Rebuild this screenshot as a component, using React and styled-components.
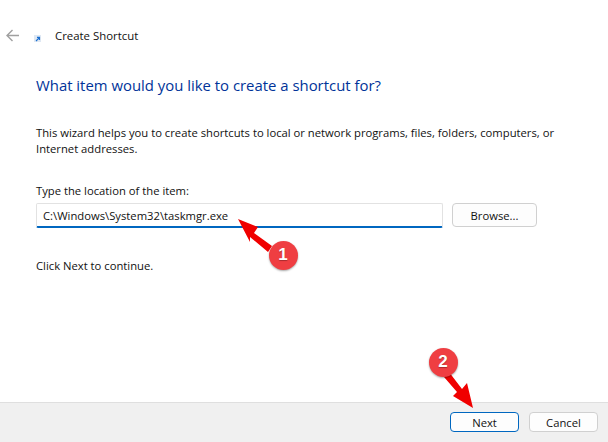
import styled, { createGlobalStyle } from "styled-components";

const Global = createGlobalStyle`
  html, body { margin: 0; padding: 0; background: #fff; }
  #root { width: 608px; height: 442px; overflow: hidden; }
`;

const Win = styled.div`
  position: relative;
  width: 608px;
  height: 442px;
  display: flex;
  flex-direction: column;
  font-family: "Open Sans", "Noto Sans", sans-serif;
  font-size: 11.25px;
  color: #111;
  background: #fff;
`;

const Header = styled.div`
  display: flex;
  align-items: center;
  height: 16px;
  padding: 27px 0 0 6px;
`;

const Title = styled.div`
  margin-left: 14px;
  font-size: 11.4px;
  color: #111;
`;

const Content = styled.div`
  flex: 1;
  padding: 0 0 0 36px;
`;

const Heading = styled.h1`
  margin: 31px 0 0;
  font-size: 14.9px;
  line-height: 22px;
  font-weight: 400;
  color: #003399;
`;

const Intro = styled.p`
  margin: 29px 0 0;
  width: 530px;
  line-height: 16px;
`;

const Label = styled.div`
  margin-top: 26px;
  line-height: 16px;
`;

const FieldRow = styled.div`
  display: flex;
  align-items: flex-start;
  gap: 9px;
  margin-top: 4px;
`;

const Field = styled.div`
  box-sizing: border-box;
  width: 407px;
  height: 25px;
  padding-left: 6px;
  display: flex;
  align-items: center;
  background: #fff;
  border: 1px solid #e2e2e2;
  border-bottom: 2px solid #0067c0;
  border-radius: 2px;
`;

const Button = styled.div`
  box-sizing: border-box;
  display: flex;
  align-items: center;
  justify-content: center;
  width: ${(p) => p.$w}px;
  height: ${(p) => p.$h}px;
  background: #fdfdfd;
  border: 1px solid ${(p) => (p.$primary ? "#0067c0" : "#d0d0d0")};
  border-radius: 4px;
`;

const Hint = styled.div`
  margin-top: 30px;
  line-height: 16px;
`;

const Footer = styled.div`
  box-sizing: border-box;
  height: 40px;
  display: flex;
  justify-content: flex-end;
  gap: 10px;
  padding: 9px 10px 0 0;
  background: #f0f0f0;
  border-top: 1px solid #dfdfdf;
`;

const Overlay = styled.svg`
  position: absolute;
  left: 0;
  top: 0;
  pointer-events: none;
`;

const Badge = styled.div`
  position: absolute;
  left: ${(p) => p.$x - 14.5}px;
  top: ${(p) => p.$y - 14.5}px;
  width: 29px;
  height: 29px;
  border-radius: 50%;
  background: #ef3e42;
  color: #fff;
  display: flex;
  align-items: center;
  justify-content: center;
  font-family: "Liberation Sans", sans-serif;
  font-size: 17px;
  font-weight: 700;
  text-shadow: 0 1px 1px rgba(0, 0, 0, 0.3);
  box-shadow: 0 1px 2px rgba(0, 0, 0, 0.35);
`;

const BackArrow = () => (
  <svg width="13" height="13" viewBox="0 0 13 13" fill="none" stroke="#a0a0a0" strokeWidth="1.4">
    <path d="M13 6.5H1M6.5 1L1 6.5L6.5 12" />
  </svg>
);

const ShortcutIcon = () => (
  <svg width="7" height="7" viewBox="0 0 7 7" style={{ marginLeft: 15, marginTop: 7 }}>
    <rect width="7" height="7" fill="#dfe8f3" />
    <path d="M2 6L5 3M3 2.4H5.5V5" stroke="#1d70d0" strokeWidth="1.1" fill="none" />
  </svg>
);

export default function App() {
  return (
    <Win>
      <Global />
      <Header>
        <BackArrow />
        <ShortcutIcon />
        <Title>Create Shortcut</Title>
      </Header>
      <Content>
        <Heading>What item would you like to create a shortcut for?</Heading>
        <Intro>
          This wizard helps you to create shortcuts to local or network programs, files, folders, computers, or
          Internet addresses.
        </Intro>
        <Label>Type the location of the item:</Label>
        <FieldRow>
          <Field>C:\Windows\System32\taskmgr.exe</Field>
          <Button $w={85} $h={24}>Browse...</Button>
        </FieldRow>
        <Hint>Click Next to continue.</Hint>
      </Content>
      <Footer>
        <Button $w={69} $h={20} $primary>Next</Button>
        <Button $w={69} $h={20}>Cancel</Button>
      </Footer>
      <Overlay width="608" height="442" viewBox="0 0 608 442">
        <path d="M238 219L258 227L254 233L272 246L268 252L250 237L250 242Z" fill="#f00000" />
        <path d="M473 408L467 383L462 389L449 372L444 377L457 392L453 396Z" fill="#f00000" />
      </Overlay>
      <Badge $x={283} $y={255}>1</Badge>
      <Badge $x={443} $y={362}>2</Badge>
    </Win>
  );
}
